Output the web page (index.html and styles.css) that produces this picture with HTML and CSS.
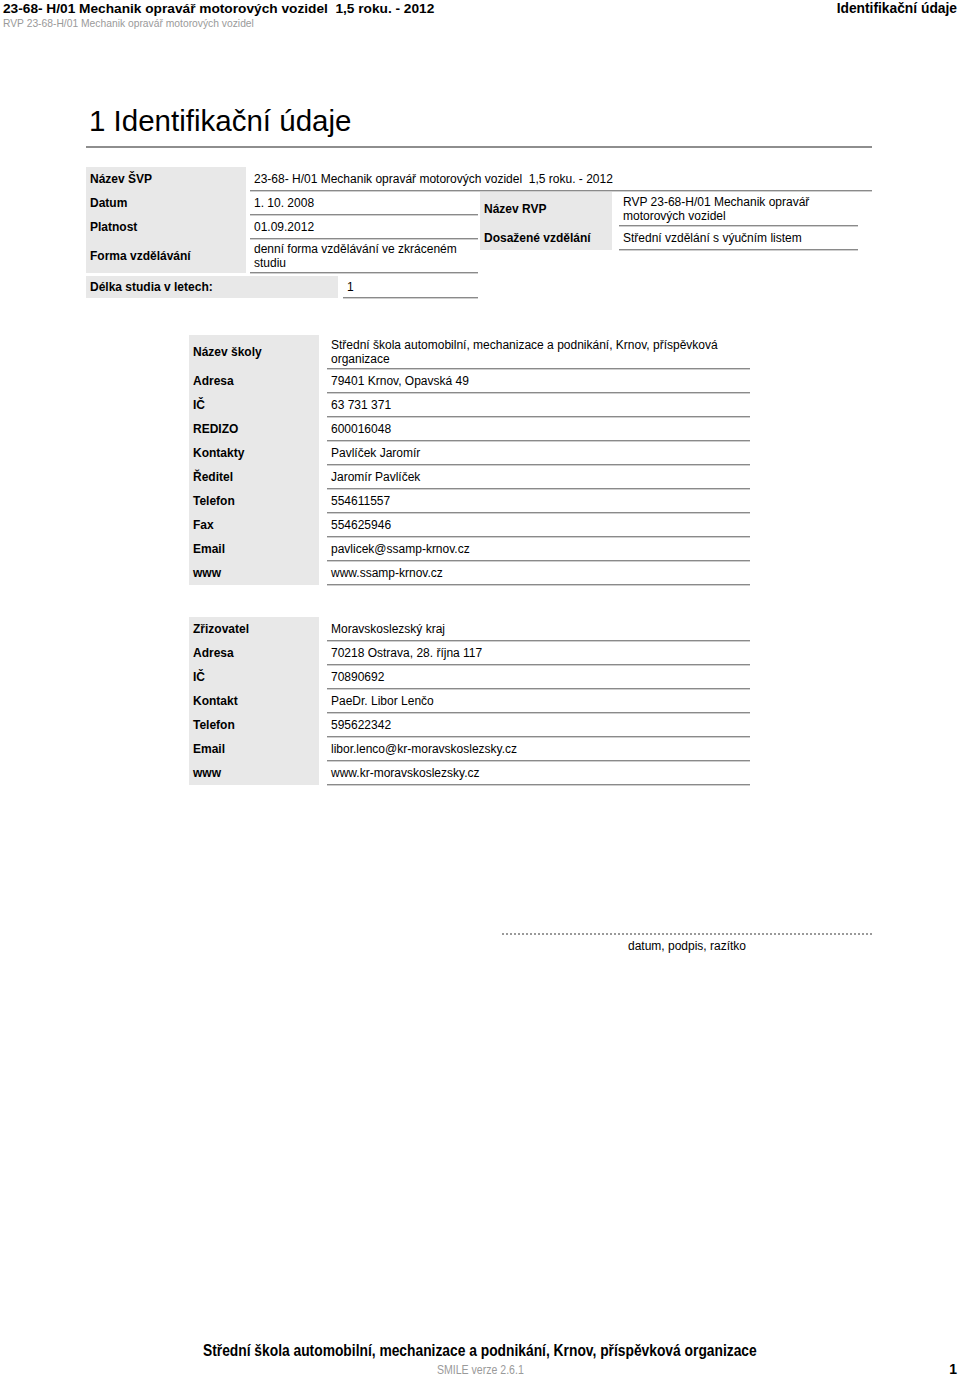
FILE: index.html
```html
<!DOCTYPE html>
<html lang="cs">
<head>
<meta charset="utf-8">
<title>Identifikační údaje</title>
<link rel="stylesheet" href="styles.css">
</head>
<body>
<div class="page">
  <header class="top">
    <div class="top-left">
      <div class="doc-title">23-68- H/01 Mechanik opravář motorových vozidel&nbsp; 1,5 roku. - 2012</div>
      <div class="doc-sub">RVP 23-68-H/01 Mechanik opravář motorových vozidel</div>
    </div>
    <div class="top-right">Identifikační údaje</div>
  </header>

  <main class="content">
    <h1 class="heading">1 Identifikační údaje</h1>

    <section class="svp">
      <div class="kv kv-first">
        <div class="k">Název ŠVP</div>
        <div class="v">23-68- H/01 Mechanik opravář motorových vozidel&nbsp; 1,5 roku. - 2012</div>
      </div>
      <div class="split">
        <div class="split-left">
          <div class="kv kv-svp">
            <div class="k">Datum</div>
            <div class="v">1. 10. 2008</div>
            <div class="k">Platnost</div>
            <div class="v">01.09.2012</div>
            <div class="k">Forma vzdělávání</div>
            <div class="v">denní forma vzdělávání ve zkráceném studiu</div>
          </div>
          <div class="kv kv-delka">
            <div class="k">Délka studia v letech:</div>
            <div class="v">1</div>
          </div>
        </div>
        <div class="kv kv-rvp">
          <div class="k">Název RVP</div>
          <div class="v">RVP 23-68-H/01 Mechanik opravář motorových vozidel</div>
          <div class="k">Dosažené vzdělání</div>
          <div class="v">Střední vzdělání s výučním listem</div>
        </div>
      </div>
    </section>

    <section class="kv kv-school">
      <div class="k">Název školy</div>
      <div class="v">Střední škola automobilní, mechanizace a podnikání, Krnov, příspěvková organizace</div>
      <div class="k">Adresa</div>
      <div class="v">79401 Krnov, Opavská 49</div>
      <div class="k">IČ</div>
      <div class="v">63 731 371</div>
      <div class="k">REDIZO</div>
      <div class="v">600016048</div>
      <div class="k">Kontakty</div>
      <div class="v">Pavlíček Jaromír</div>
      <div class="k">Ředitel</div>
      <div class="v">Jaromír Pavlíček</div>
      <div class="k">Telefon</div>
      <div class="v">554611557</div>
      <div class="k">Fax</div>
      <div class="v">554625946</div>
      <div class="k">Email</div>
      <div class="v">pavlicek@ssamp-krnov.cz</div>
      <div class="k">www</div>
      <div class="v">www.ssamp-krnov.cz</div>
    </section>

    <section class="kv kv-school kv-founder">
      <div class="k">Zřizovatel</div>
      <div class="v">Moravskoslezský kraj</div>
      <div class="k">Adresa</div>
      <div class="v">70218 Ostrava, 28. října 117</div>
      <div class="k">IČ</div>
      <div class="v">70890692</div>
      <div class="k">Kontakt</div>
      <div class="v">PaeDr. Libor Lenčo</div>
      <div class="k">Telefon</div>
      <div class="v">595622342</div>
      <div class="k">Email</div>
      <div class="v">libor.lenco@kr-moravskoslezsky.cz</div>
      <div class="k">www</div>
      <div class="v">www.kr-moravskoslezsky.cz</div>
    </section>

    <div class="signature">
      <div class="sig-line"></div>
      <div class="sig-text">datum, podpis, razítko</div>
    </div>
  </main>

  <footer class="foot">
    <div class="foot-title"><span class="narrow narrow-title">Střední škola automobilní, mechanizace a podnikání, Krnov, příspěvková organizace</span></div>
    <div class="foot-row">
      <span></span>
      <span class="narrow foot-ver">SMILE verze 2.6.1</span>
      <span class="foot-page">1</span>
    </div>
  </footer>
</div>
</body>
</html>
```

FILE: styles.css
```css
* { box-sizing: border-box; }

html, body {
  margin: 0;
  padding: 0;
  background: #ffffff;
}

body {
  font-family: "Liberation Sans", Arial, sans-serif;
  color: #000;
  font-size: 12px;
  line-height: 14px;
}

.page {
  width: 960px;
  height: 1377px;
  display: flex;
  flex-direction: column;
}

/* running header */
.top {
  display: flex;
  justify-content: space-between;
  align-items: flex-start;
  padding: 1px 3px 0 3px;
}
.doc-title {
  font-weight: bold;
  font-size: 13.7px;
  line-height: 16px;
}
.doc-sub {
  font-size: 10.3px;
  line-height: 14px;
  color: #9a9a9a;
}
.top-right {
  font-weight: bold;
  font-size: 13.8px;
  line-height: 16px;
}

/* main content column */
.content {
  margin-left: 86px;
  width: 786px;
}

.heading {
  margin: 73px 0 0 0;
  padding: 0 0 8px 3px;
  font-size: 29.5px;
  line-height: 34px;
  font-weight: normal;
  border-bottom: 2px solid #8e8e8e;
}

/* key / value tables */
.kv {
  display: grid;
}
.k {
  background: #e8e8e8;
  font-weight: bold;
  display: flex;
  align-items: center;
  padding: 0 4px;
}
.v {
  min-height: 24px;
  display: flex;
  align-items: center;
  padding: 3px 4px 2px 4px;
  border-bottom: 1px solid #8a8a8a;
  box-shadow: 0 1px 0 #cfcfcf;
}

.svp {
  margin-top: 19px;
}
.kv-first {
  grid-template-columns: 160px 622px;
  column-gap: 4px;
}
.split {
  display: flex;
  gap: 2px;
  align-items: flex-start;
}
.split-left {
  width: 392px;
}
.kv-svp {
  grid-template-columns: 160px 228px;
  column-gap: 4px;
}
.kv-delka {
  margin-top: 3px;
  grid-template-columns: 252px 135px;
  column-gap: 5px;
}
.kv-delka .v {
  min-height: 22px;
  padding-top: 2px;
}
.kv-rvp {
  margin-top: 1px;
  grid-template-columns: 132px 239px;
  column-gap: 7px;
}

.kv-school {
  margin: 37px 0 0 103px;
  width: 561px;
  grid-template-columns: 130px 423px;
  column-gap: 8px;
}
.kv-founder {
  margin-top: 32px;
}

/* signature */
.signature {
  margin: 148px 0 0 416px;
  width: 370px;
}
.sig-line {
  border-top: 2px dotted #9a9a9a;
}
.sig-text {
  text-align: center;
  margin-top: 4px;
}

/* footer */
.foot {
  margin-top: auto;
  padding: 0 3px 0 3px;
}
.narrow {
  display: inline-block;
  transform-origin: center;
}
.foot-title {
  text-align: center;
  font-weight: bold;
  font-size: 16px;
  line-height: 18px;
}
.narrow-title {
  transform: scaleX(0.863);
}
.foot-row {
  display: grid;
  grid-template-columns: 1fr auto 1fr;
  align-items: end;
  height: 17px;
}
.foot-ver {
  color: #9a9a9a;
  font-size: 12px;
  line-height: 14px;
  transform: scaleX(0.88);
}
.foot-page {
  justify-self: end;
  font-weight: bold;
  font-size: 14px;
  line-height: 16px;
}
```
